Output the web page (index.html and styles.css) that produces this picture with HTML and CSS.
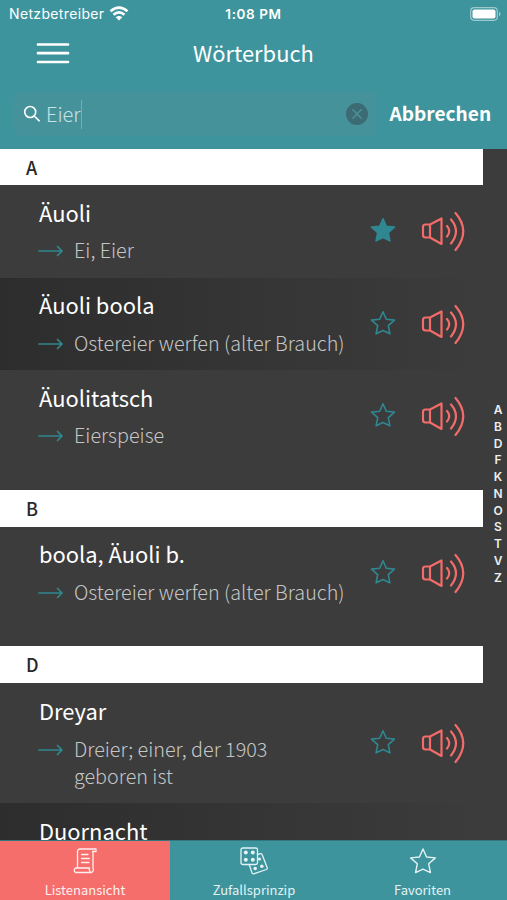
FILE: index.html
```html
<!DOCTYPE html>
<html lang="de">
<head>
<meta charset="utf-8">
<title>Wörterbuch</title>
<link rel="stylesheet" href="styles.css">
</head>
<body>
<svg class="defs" aria-hidden="true">
  <symbol id="star" viewBox="0 0 26 26"><path d="M13 1.800l3.300 7.500 8.200.8-6.200 5.500 1.600 8.200-6.900-3.200-6.900 3.200 1.600-8.200-6.200-5.500 8.200-.8z"/></symbol>
  <symbol id="arrow" viewBox="0 0 26 12"><path d="M1 6h23M19.500 1.500L24 6l-4.500 4.500"/></symbol>
  <symbol id="sound" viewBox="0 0 44 42"><path d="M9 14.500L20.500 8.500v25.500L9 27.500zM9 14.500H4.500q-2.500 0-2.500 2.500v8q0 2.500 2.500 2.500H9M26 16q4.500 5 0 10.500M30 9.500q10 11.500 0 24M34.500 3q15.500 18 0 37"/></symbol>
</svg>
<div class="app">
  <header class="top">
    <div class="status">
      <div class="carrier"><span>Netzbetreiber</span>
        <svg class="wifi" viewBox="0 0 20 15"><path d="M1.500 5.200q8.500-7.200 17 0M4.500 8.700q5.500-4.700 11 0"/><path class="solid" d="M6.700 11.200q3.300-2.600 6.600 0L10 14.500z"/></svg>
      </div>
      <time>1:08 PM</time>
      <svg class="battery" viewBox="0 0 31 14"><rect class="case" x=".7" y=".7" width="26.600" height="12.600" rx="3.500"/><rect class="charge" x="2.500" y="2.500" width="23" height="9" rx="2"/><path class="tip" d="M29 4.500v5q3-2.500 0-5z"/></svg>
    </div>
    <div class="nav">
      <svg class="menu" viewBox="0 0 34 22"><path d="M2 2.500h30M2 11.200h30M2 20h30"/></svg>
      <h1>Wörterbuch</h1>
    </div>
    <div class="searchbar">
      <div class="field">
        <svg class="lens" viewBox="0 0 18 18"><circle cx="7.200" cy="7" r="5.500"/><path d="M11.200 11l5 4.800"/></svg>
        <span class="query">Eier</span><i class="caret"></i>
        <svg class="clear" viewBox="0 0 22 22"><circle cx="11" cy="11" r="11"/><path d="M6.800 6.800l8.400 8.400M15.200 6.800l-8.400 8.400"/></svg>
      </div>
      <span class="cancel">Abbrechen</span>
    </div>
  </header>
  <main class="content">
    <div class="list">
      <section>
        <h2>A</h2>
        <article class="row"><div class="words"><h3>Äuoli</h3><div class="meaning"><svg class="arrow"><use href="#arrow"/></svg><p>Ei, Eier</p></div></div><svg class="star on"><use href="#star"/></svg><svg class="sound"><use href="#sound"/></svg></article>
        <article class="row alt"><div class="words"><h3>Äuoli boola</h3><div class="meaning"><svg class="arrow"><use href="#arrow"/></svg><p>Ostereier werfen (alter Brauch)</p></div></div><svg class="star"><use href="#star"/></svg><svg class="sound"><use href="#sound"/></svg></article>
        <article class="row"><div class="words"><h3>Äuolitatsch</h3><div class="meaning"><svg class="arrow"><use href="#arrow"/></svg><p>Eierspeise</p></div></div><svg class="star"><use href="#star"/></svg><svg class="sound"><use href="#sound"/></svg></article>
      </section>
      <section>
        <h2>B</h2>
        <article class="row"><div class="words"><h3>boola, Äuoli b.</h3><div class="meaning"><svg class="arrow"><use href="#arrow"/></svg><p>Ostereier werfen (alter Brauch)</p></div></div><svg class="star"><use href="#star"/></svg><svg class="sound"><use href="#sound"/></svg></article>
      </section>
      <section>
        <h2>D</h2>
        <article class="row"><div class="words"><h3>Dreyar</h3><div class="meaning"><svg class="arrow"><use href="#arrow"/></svg><p>Dreier; einer, der 1903<br>geboren ist</p></div></div><svg class="star"><use href="#star"/></svg><svg class="sound"><use href="#sound"/></svg></article>
        <article class="row alt"><div class="words"><h3>Duornacht</h3></div></article>
      </section>
    </div>
    <nav class="index"><span>A</span><span>B</span><span>D</span><span>F</span><span>K</span><span>N</span><span>O</span><span>S</span><span>T</span><span>V</span><span>Z</span></nav>
  </main>
  <footer class="tabs">
    <div class="tab active">
      <svg viewBox="0 0 28 28"><path d="M6.500 21V4.500Q6.500 2 9 2h16v2.500h-3.500M22 4.500V21M6.500 21h-2q-2.500 2.200 0 4.500h16q2.500-.8 1.500-4.500M4.500 21h14q-1 3 2 4.500M10.500 7.500h6.500M10.500 11.500h8M10.500 15.500h7.500"/></svg>
      <span>Listenansicht</span>
    </div>
    <div class="tab">
      <svg viewBox="0 0 28 28"><rect x="1" y="1" width="16.500" height="16.500" rx="1.800"/><path d="M17.500 7.500l3-.8q1.300-.3 1.700 1l5 13q.4 1.300-.9 1.800l-12.500 4.300q-1.400.4-1.800-.9l-2.800-8.400"/><g class="dots"><circle cx="5.800" cy="5.500" r="2"/><circle cx="12.800" cy="5.500" r="2"/><circle cx="5.800" cy="12.800" r="2"/><circle cx="12.800" cy="12.800" r="2"/><circle cx="19.500" cy="12" r="1.600"/><circle cx="15.200" cy="21.500" r="1.800"/><circle cx="21.800" cy="19.200" r="1.800"/></g></svg>
      <span>Zufallsprinzip</span>
    </div>
    <div class="tab">
      <svg class="fav"><use href="#star"/></svg>
      <span>Favoriten</span>
    </div>
  </footer>
</div>
</body>
</html>
```
FILE: styles.css
```css
* { box-sizing: border-box; }
body { margin: 0; background: #3c3c3c; font-family: "Noto Sans CJK SC", "Noto Sans", sans-serif; color: #fff; }
h1, h2, h3, p { margin: 0; font-weight: 400; white-space: nowrap; }
svg { fill: none; stroke: currentColor; stroke-linecap: round; stroke-linejoin: round; flex: none; display: block; }
.defs { position: absolute; width: 0; height: 0; }
.app { width: 507px; height: 900px; display: flex; flex-direction: column; overflow: hidden; }

.top { height: 149px; flex: none; background: #3e949d; }
.status { height: 28px; display: grid; grid-template-columns: 1fr auto 1fr; align-items: center; padding: 0 6px 0 9px; font: 500 14px/28px Inter, sans-serif; }
.status time { font-weight: 600; font-size: 13.500px; letter-spacing: .6px; margin-right: 3px; }
.carrier { display: flex; align-items: center; gap: 5px; font-weight: 400; font-size: 14px; letter-spacing: .35px; }
.wifi { width: 20px; height: 15px; stroke-width: 2.600; margin-top: -2px; stroke-linecap: butt; }
.wifi .solid { fill: #fff; stroke: none; }
.battery { width: 31px; height: 14px; justify-self: end; margin-top: -1px; stroke: none; }
.battery .case { stroke: #9ec9ce; stroke-width: 1.200; }
.battery .charge { fill: #fff; }
.battery .tip { fill: #9ec9ce; }
.nav { height: 49px; display: grid; grid-template-columns: 1fr auto 1fr; align-items: center; padding: 0 36px; }
.menu { width: 34px; height: 22px; stroke-width: 2.700; }
h1 { font-size: 21.900px; line-height: 49px; }
.searchbar { display: flex; align-items: center; height: 44px; margin-top: 15px; }
.field { display: flex; align-items: center; width: 362px; height: 44px; margin-left: 14px; padding: 0 8px 0 9px; border-radius: 8px; background: #46929b; }
.lens { width: 18px; height: 18px; stroke-width: 1.600; }
.query { font-size: 20px; font-weight: 300; margin: -1px 0 0 5px; color: #c8e2e5; }
.caret { width: 1.500px; height: 29px; background: #75adb5; }
.clear { width: 22px; height: 22px; margin-left: auto; }
.clear circle { fill: #3d6b74; stroke: none; }
.clear path { stroke: #4b929b; stroke-width: 1.500; }
.cancel { margin: -2px 0 0 13.500px; font-size: 19.100px; font-weight: 700; }

.content { flex: 1; min-height: 0; display: flex; overflow: hidden; }
.list { width: 488px; flex: none; }
section { padding-bottom: 27px; }
h2 { width: 482.500px; height: 37px; background: #fff; color: #292929; font-size: 18px; font-weight: 500; line-height: 36px; padding-left: 26px; }
section:first-child h2 { height: 36px; }
.row { display: flex; min-height: 92.600px; padding: 13.700px 22px 14.400px 39px; }
.alt { background: linear-gradient(90deg, #2d2d2d, #3c3c3c); }
.words { width: 332px; flex: none; }
h3 { font-size: 21.900px; line-height: 28px; }
.meaning { display: flex; margin-top: 9.500px; }
.arrow { width: 26px; height: 12px; margin: 9px 10px 0 -1px; color: #318790; stroke-width: 1.700; }
p { font-size: 19.750px; font-weight: 300; line-height: 27px; color: #c6c6c6; }
.star, .sound { align-self: center; }
.star { width: 26px; height: 26px; color: #2f8791; stroke-width: 1.600; margin: -2px 0 0 -1px; }
.star.on { fill: currentColor; }
.sound { width: 44px; height: 42px; color: #f36c69; stroke-width: 2.200; margin-left: 25px; }
.index { width: 19px; padding: 253px 0 0 1px; display: flex; flex-direction: column; align-items: center; font: 600 12px/16.750px Inter, sans-serif; color: #eee; }

.tabs { height: 60px; flex: none; display: grid; grid-template-columns: 170px 168px 169px; background: #3e949d; border-top: 1px solid #347780; }
.tab { display: flex; flex-direction: column; align-items: center; padding-top: 6px; font-size: 13px; line-height: 20px; color: #e3f2f4; }
.active { background: #f56e6b; color: #fff0ef; }
.tab svg { width: 28px; height: 28px; stroke-width: 1.300; }
.tab span { margin-top: 5px; }
.dots { fill: currentColor; stroke: none; }
```
